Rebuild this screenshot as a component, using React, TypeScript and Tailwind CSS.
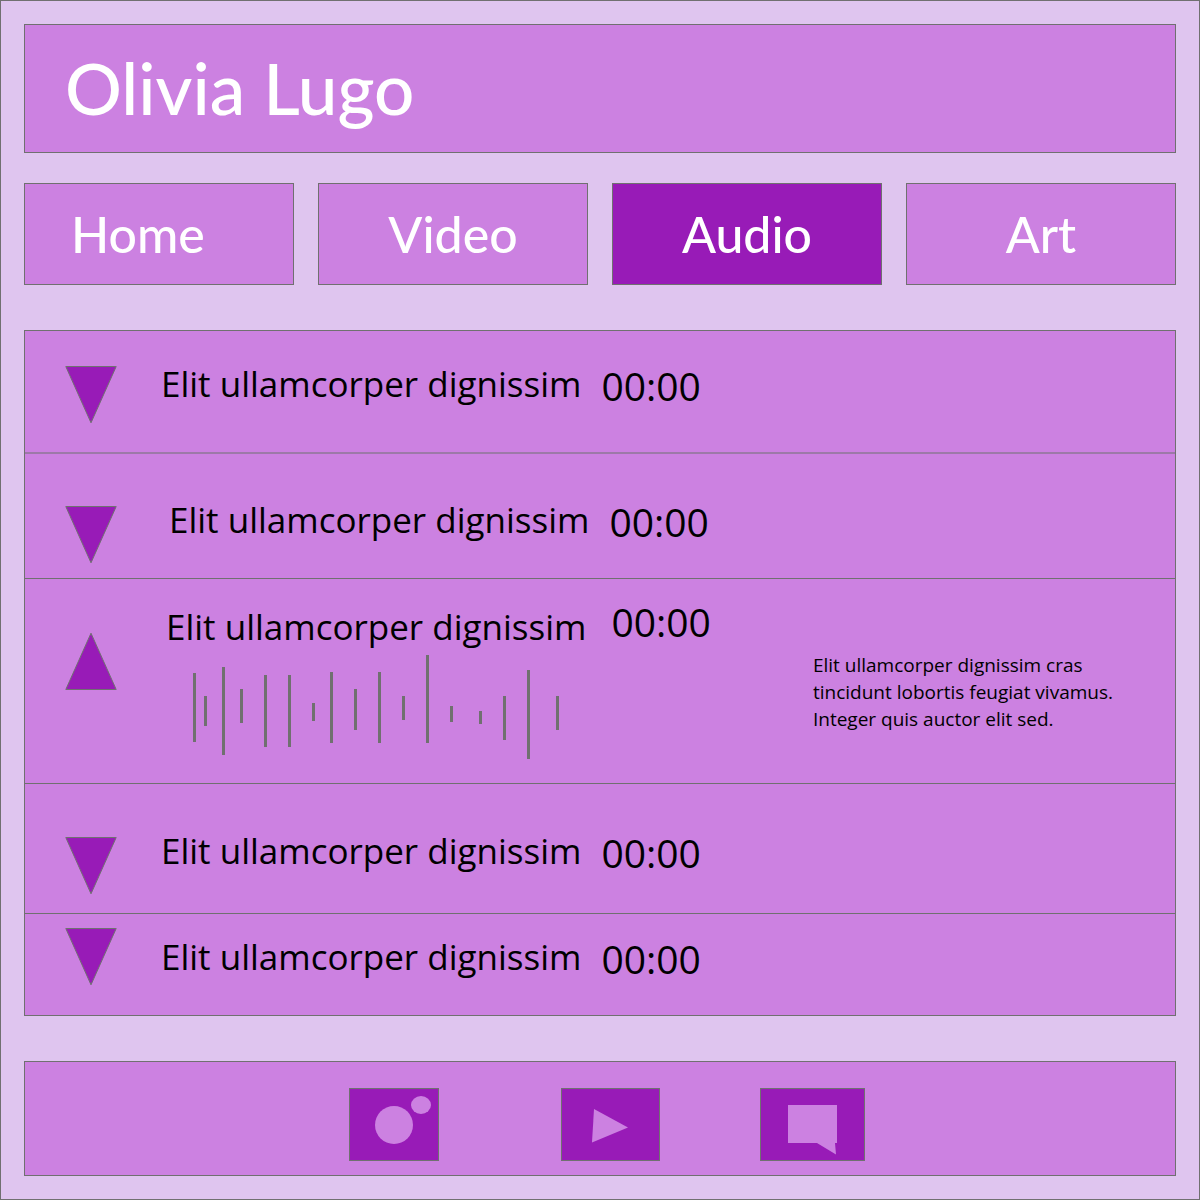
type Track = {
  row: string;
  arrow: string;
  title: string;
  time: string;
  open?: boolean;
};

const tracks: Track[] = [
  { row: 'h-[123px] border-b-2 border-[#9d79a8]', arrow: 'mt-[35px]', title: 'mt-7 ml-11', time: 'mt-[30px] ml-5' },
  { row: 'h-[125px] border-b border-[#707070]', arrow: 'mt-[52px]', title: 'mt-[41px] ml-[52px]', time: 'mt-[43px] ml-5' },
  { row: 'h-[205px] border-b border-[#707070]', arrow: 'mt-[53px]', title: 'mt-[23px] ml-[49px]', time: 'mt-[18px] ml-[25px]', open: true },
  { row: 'h-[130px] border-b border-[#707070]', arrow: 'mt-[53px]', title: 'mt-[42px] ml-11', time: 'mt-11 ml-5' },
  { row: 'h-[101px]', arrow: 'mt-[14px]', title: 'mt-[18px] ml-11', time: 'mt-5 ml-5' },
];

// Each bar is [x, top, bottom].
const bars = [
  [0, 18, 87], [11, 41, 71], [29, 12, 100], [47, 34, 68], [71, 20, 92], [95, 20, 92],
  [119, 48, 66], [137, 17, 88], [161, 34, 75], [185, 17, 88], [209, 41, 65], [233, 0, 88],
  [257, 51, 67], [286, 56, 69], [310, 41, 85], [334, 15, 104], [363, 41, 75],
];

const tabs = [
  { name: 'Home', style: 'bg-[#cc81e1] pl-[46px] text-left' },
  { name: 'Video', style: 'bg-[#cc81e1] text-center' },
  { name: 'Audio', style: 'bg-[#981bb7] text-center' },
  { name: 'Art', style: 'bg-[#cc81e1] text-center' },
];

function Arrow({ up }: { up?: boolean }) {
  return (
    <svg width="52" height="58" viewBox="0 0 52 58" className="block" aria-hidden="true">
      <path
        d={up ? 'M0.8 57.5 L26 1.2 L51.2 57.5 Z' : 'M0.8 0.5 L26 56.8 L51.2 0.5 Z'}
        fill="#981bb7"
        stroke="#707070"
      />
    </svg>
  );
}

function Waveform() {
  return (
    <svg width="366" height="104" viewBox="0 0 366 104" className="mt-[3px] ml-[27px] block" role="img" aria-label="Waveform">
      {bars.map(([x, top, bottom]) => (
        <rect key={x} x={x} y={top} width="3" height={bottom - top} fill="#707070" />
      ))}
    </svg>
  );
}

export default function App() {
  return (
    <div className="flex flex-col border border-[#707070] bg-[#dfc5ef] p-[23px] font-['Open_Sans','Noto_Sans',sans-serif] text-black">
      <header className="border border-[#707070] bg-[#cc81e1] px-10 pt-[23px] pb-6">
        <h1 className="font-['Lato',sans-serif] text-[71px] leading-[80px] font-medium text-white">Olivia Lugo</h1>
      </header>

      <nav className="mt-[30px] grid grid-cols-4 gap-6 font-['Lato',sans-serif] text-[50px] font-medium text-white">
        {tabs.map((tab) => (
          <a key={tab.name} href="#" className={`border border-[#707070] py-5 leading-[60px] ${tab.style}`}>
            {tab.name}
          </a>
        ))}
      </nav>

      <main className="mt-[45px] border border-[#707070] bg-[#cc81e1]">
        <ul>
          {tracks.map((track, i) => (
            <li key={i} className={`flex items-start pl-10 whitespace-nowrap ${track.row}`}>
              <button type="button" aria-label="Toggle track details" aria-expanded={!!track.open} className={track.arrow}>
                <Arrow up={track.open} />
              </button>
              <div className={track.title}>
                <h2 className="text-[35px] leading-[50px]">Elit ullamcorper dignissim</h2>
                {track.open && <Waveform />}
              </div>
              <span className={`text-[39px] leading-[50px] ${track.time}`}>00:00</span>
              {track.open && (
                <p className="mt-[73px] mr-[62px] ml-auto text-[19px] leading-[27px]">
                  Elit ullamcorper dignissim cras
                  <br />
                  tincidunt lobortis feugiat vivamus.
                  <br />
                  Integer quis auctor elit sed.
                </p>
              )}
            </li>
          ))}
        </ul>
      </main>

      <footer className="mt-[45px] flex justify-center border border-[#707070] bg-[#cc81e1] pt-[26px] pb-[14px] pl-[14px]">
        <a href="#" aria-label="Photos" className="mr-[122px] border border-[#707070] bg-[#981bb7]">
          <svg width="88" height="71" viewBox="0 0 88 71" fill="#cc81e1" className="block">
            <circle cx="44" cy="36" r="19" />
            <ellipse cx="71" cy="16" rx="10" ry="9" />
          </svg>
        </a>
        <a href="#" aria-label="Videos" className="mr-[100px] border border-[#707070] bg-[#981bb7]">
          <svg width="97" height="71" viewBox="0 0 97 71" fill="#cc81e1" className="block">
            <path d="M32 20 L66 38.5 L30 53.5 Z" />
          </svg>
        </a>
        <a href="#" aria-label="Messages" className="border border-[#707070] bg-[#981bb7]">
          <svg width="103" height="71" viewBox="0 0 103 71" fill="#cc81e1" className="block">
            <path d="M27 16 H76 V54 H74 L75 65.5 L56 54 H27 Z" />
          </svg>
        </a>
      </footer>
    </div>
  );
}
